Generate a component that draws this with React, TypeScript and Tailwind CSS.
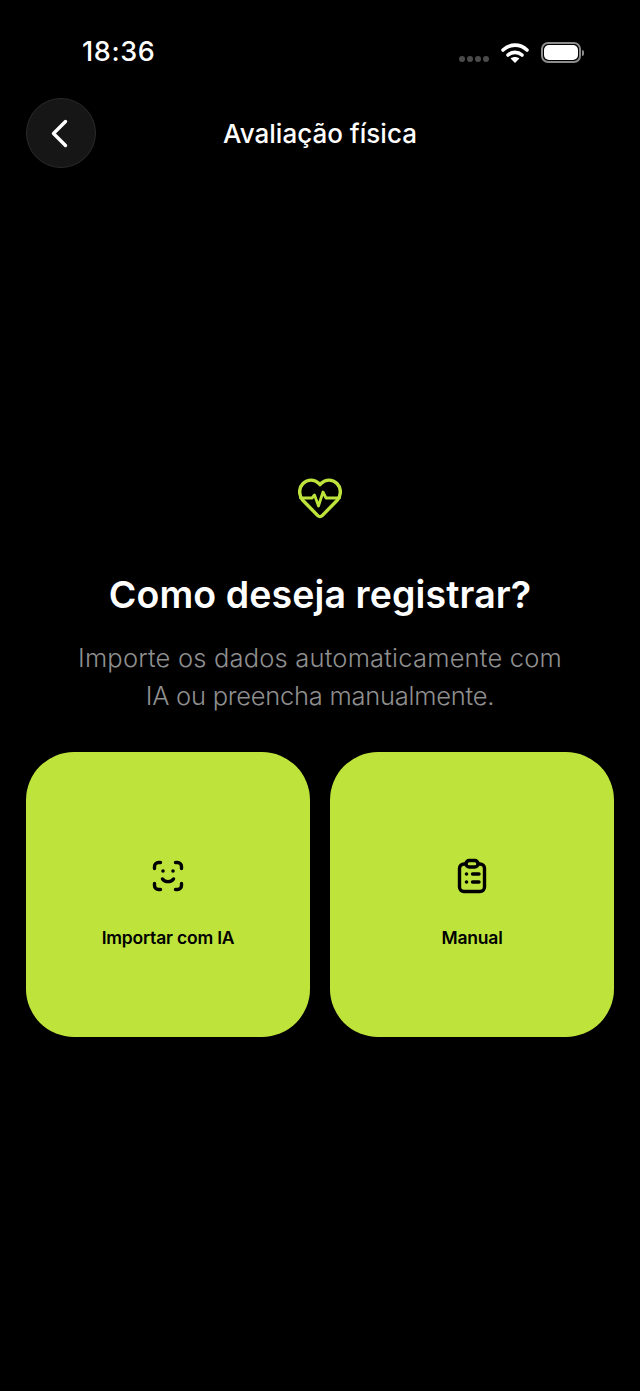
export default function App() {
  return (
    <div className="w-[640px] h-[1391px] bg-black text-white overflow-hidden font-['Inter',sans-serif]">
      <div className="h-[98px] pl-[82px] pr-[56px] pt-[36px] flex justify-between items-start">
        <span className="text-[27px] leading-[32px] font-medium tracking-[0.6px]">18:36</span>
        <div className="flex items-center pt-[6px]">
          <div className="flex gap-[2px] mr-[12px] mt-[12px]">
            <i className="w-[6px] h-[6px] rounded-full bg-[#4a4a4a]" />
            <i className="w-[6px] h-[6px] rounded-full bg-[#4a4a4a]" />
            <i className="w-[6px] h-[6px] rounded-full bg-[#4a4a4a]" />
            <i className="w-[6px] h-[6px] rounded-full bg-[#4a4a4a]" />
          </div>
          <svg width="28" height="21" viewBox="0 0 28 21" fill="none" className="mr-[12px]">
            <path d="M2 8 C9 1.5 19 1.5 26 8" stroke="#fff" strokeWidth="3.6" strokeLinecap="round" />
            <path d="M7 13 C11 9.5 17 9.5 21 13" stroke="#fff" strokeWidth="3.6" strokeLinecap="round" />
            <path d="M14 21 L9.6 16.6 C12 14.6 16 14.6 18.4 16.6 Z" fill="#fff" />
          </svg>
          <div className="flex items-center">
            <div className="w-[40px] h-[21px] rounded-[7px] border-2 border-[#8c8c8c] p-[1px]">
              <div className="w-full h-full rounded-[5px] bg-white" />
            </div>
            <div className="w-[2px] h-[6px] ml-[1px] rounded-r-full bg-[#8c8c8c]" />
          </div>
        </div>
      </div>

      <div className="h-[70px] px-[26px] flex items-center relative">
        <button className="w-[70px] h-[70px] rounded-full bg-[#161616] border border-[#2a2a2a] flex items-center justify-center">
          <svg width="24" height="30" viewBox="0 0 24 30" fill="none">
            <path d="M16.5 3.5 L4.5 15.5 L16.5 27.5" stroke="#fff" strokeWidth="3.4" strokeLinecap="round" strokeLinejoin="round" />
          </svg>
        </button>
        <h1 className="absolute inset-x-0 top-[20px] text-center text-[26px] leading-[32px] font-medium">Avaliação física</h1>
      </div>

      <div className="flex flex-col items-center mt-[308px]">
        <svg width="44" height="44" viewBox="0 0 44 44" fill="none" stroke="#bee43c" strokeWidth="3.4" strokeLinecap="round" strokeLinejoin="round">
          <path d="M19.8 39.6 L5 24.5 C0.5 19.5 0.5 12 5 7.5 C9.5 3 16.5 3 21 7.5 L22 8.6 L23 7.5 C27.5 3 34.5 3 39 7.5 C43.5 12 43.5 19.5 39 24.5 L24.2 39.6 C23 40.8 21 40.8 19.8 39.6 Z" />
          <path d="M2.5 22 H14 L16.5 19 L20.5 30 L25 16 L28 22 H41.5" strokeWidth="2.8" />
        </svg>
        <h2 className="mt-[53px] text-[37.5px] leading-[44px] font-semibold tracking-[0.1px]">Como deseja registrar?</h2>
        <p className="mt-[22px] text-center text-[25.5px] leading-[38px] font-light text-[#8f8f8f]">
          <span className="tracking-[0.2px]">Importe os dados automaticamente com</span>
          <br />
          <span className="tracking-[-0.25px]">IA ou preencha manualmente.</span>
        </p>
      </div>

      <div className="mt-[37px] px-[26px] grid grid-cols-2 gap-[20px]">
        <div className="h-[285px] rounded-[48px] bg-[#bee43c] flex flex-col items-center text-black pt-[106px]">
          <svg width="36" height="36" viewBox="0 0 36 36" fill="none" stroke="#000" strokeWidth="3.4" strokeLinecap="round" strokeLinejoin="round">
            <path d="M4.5 10.5 V8.5 A4 4 0 0 1 8.5 4.5 H10.5" />
            <path d="M25.5 4.5 H27.5 A4 4 0 0 1 31.5 8.5 V10.5" />
            <path d="M4.5 25.5 V27.5 A4 4 0 0 0 8.5 31.5 H10.5" />
            <path d="M31.5 25.5 V27.5 A4 4 0 0 1 27.5 31.5 H25.5" />
            <path d="M12.5 21 C15 24.5 21 24.5 23.5 21" />
            <circle cx="13" cy="13" r="1.8" fill="#000" stroke="none" />
            <circle cx="23" cy="13" r="1.8" fill="#000" stroke="none" />
          </svg>
          <span className="mt-[31px] text-[17.5px] leading-[26px] font-semibold tracking-[-0.2px]">Importar com IA</span>
        </div>
        <div className="h-[285px] rounded-[48px] bg-[#bee43c] flex flex-col items-center text-black pt-[106px]">
          <svg width="36" height="36" viewBox="0 0 36 36" fill="none" stroke="#000" strokeWidth="3.4" strokeLinecap="round" strokeLinejoin="round">
            <path d="M12 6 H10 A4.5 4.5 0 0 0 5.5 10.5 V29 A4.5 4.5 0 0 0 10 33.5 H26 A4.5 4.5 0 0 0 30.5 29 V10.5 A4.5 4.5 0 0 0 26 6 H24" />
            <rect x="12" y="2.5" width="12" height="6.5" rx="3.25" />
            <path d="M18.5 16 H25" />
            <path d="M18.5 24 H25" />
            <circle cx="12.5" cy="16" r="1.8" fill="#000" stroke="none" />
            <circle cx="12.5" cy="24" r="1.8" fill="#000" stroke="none" />
          </svg>
          <span className="mt-[31px] text-[17.5px] leading-[26px] font-semibold tracking-[-0.2px]">Manual</span>
        </div>
      </div>
    </div>
  );
}
